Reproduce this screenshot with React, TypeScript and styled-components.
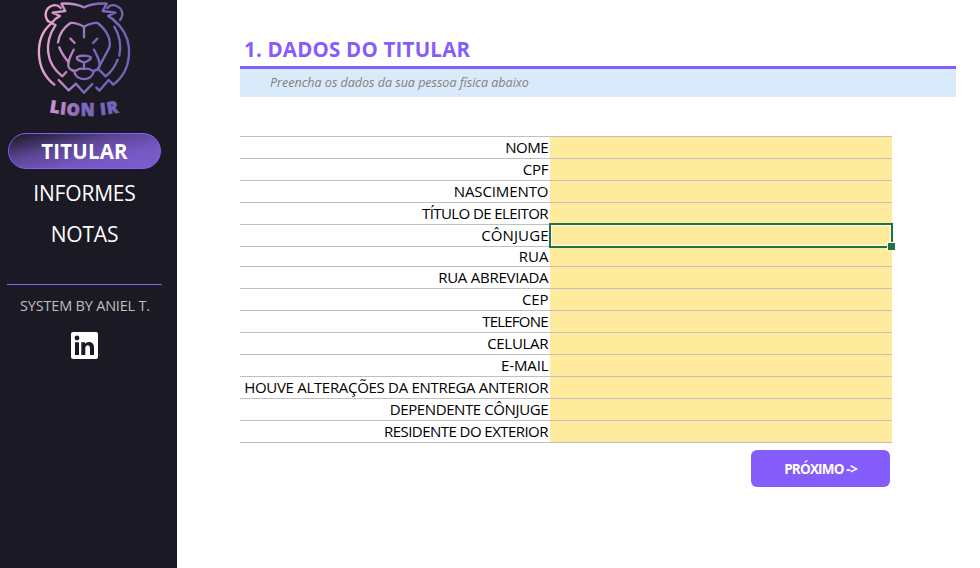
import React from "react";
import styled, { createGlobalStyle } from "styled-components";

const GlobalStyle = createGlobalStyle`
  * { box-sizing: border-box; }
  body { margin: 0; background: #fff; overflow: hidden; }
`;

const Page = styled.div`
  display: flex;
  width: 980px;
  height: 568px;
  font-family: "Open Sans", "Noto Sans", sans-serif;
  background: #fff;
`;

const Sidebar = styled.aside`
  width: 177px;
  height: 100%;
  flex: none;
  display: flex;
  flex-direction: column;
  background: #1a1924;
`;

const LogoSvg = styled.svg`
  display: block;
  width: 130px;
  height: 125px;
  margin-left: 20px;
`;

const Nav = styled.nav`
  display: flex;
  flex-direction: column;
  gap: 5px;
  width: 153px;
  margin: 8px 0 0 8px;
`;

const NavItem = styled.a<{ $active?: boolean }>`
  height: 36px;
  display: flex;
  align-items: center;
  justify-content: center;
  border-radius: 18px;
  border: 1px solid ${(p) => (p.$active ? "#855dfb" : "transparent")};
  padding-top: ${(p) => (p.$active ? "0" : "2px")};
  background: ${(p) =>
    p.$active ? "linear-gradient(167deg, #211d30 5%, #5b4693 38%, #7657c2 68%, #7c5dcf 100%)" : "none"};
  color: #fff;
  font-size: ${(p) => (p.$active ? "20.5px" : "21px")};
  font-weight: ${(p) => (p.$active ? 700 : 400)};
  letter-spacing: ${(p) => (p.$active ? "0.2px" : "-0.2px")};
`;

const Divider = styled.div`
  width: 155px;
  height: 1px;
  margin: 33px 0 0 7px;
  background: #855dfb;
`;

const Credit = styled.div`
  width: 170px;
  margin-top: 11px;
  line-height: 20px;
  text-align: center;
  font-size: 14.5px;
  letter-spacing: -0.2px;
  color: #bfbfbf;
`;

const LinkedIn = styled.svg`
  display: block;
  width: 30px;
  height: 28px;
  margin: 16px 0 0 71px;
`;

const Main = styled.main`
  width: 716px;
  margin-left: 63px;
`;

const Title = styled.h1`
  margin: 0;
  height: 69px;
  padding: 36px 0 0 4px;
  border-bottom: 3px solid #855dfb;
  color: #855dfb;
  font-size: 20.5px;
  letter-spacing: 0.2px;
  line-height: 27px;
  font-weight: 700;
  white-space: nowrap;
`;

const Subtitle = styled.p`
  margin: 0;
  height: 28px;
  padding-left: 30px;
  background: #d9ebfa;
  color: #7f7f7f;
  font-size: 12.5px;
  line-height: 28px;
  font-style: italic;
`;

const Form = styled.div`
  width: 652px;
  margin-top: 39px;
  border-top: 1px solid #bfbfbf;
`;

const Row = styled.div<{ $height: number }>`
  display: flex;
  height: ${(p) => p.$height}px;
  line-height: ${(p) => p.$height - 1}px;
  border-bottom: 1px solid #bfbfbf;
`;

const Label = styled.label<{ $spacing: number }>`
  width: 310px;
  padding-right: ${(p) => 1.5 - p.$spacing}px;
  text-align: right;
  white-space: nowrap;
  color: #000;
  font-size: 15px;
  letter-spacing: ${(p) => p.$spacing}px;
`;

const Field = styled.div`
  position: relative;
  flex: 1;
  background: #ffeb9c;
`;

const Selection = styled.div`
  position: absolute;
  z-index: 1;
  inset: -2px -1px -2px -1px;
  border: 2px solid #217346;
  box-shadow: inset 0 0 0 1px #fff;

  &::after {
    content: "";
    position: absolute;
    right: -4px;
    bottom: -4px;
    width: 7px;
    height: 7px;
    border: 1px solid #fff;
    border-width: 1px 0 0 1px;
    background: #217346;
  }
`;

const NextButton = styled.button`
  display: block;
  width: 139px;
  height: 37px;
  margin: 7px 0 0 511px;
  padding: 1px 0 0;
  border: 0;
  border-radius: 6px;
  background: #855dfb;
  color: #fff;
  font-family: "Open Sans", sans-serif;
  font-size: 13.5px;
  font-weight: 700;
  letter-spacing: -0.8px;
`;

const fields = [
  { label: "NOME", spacing: -0.5 },
  { label: "CPF", spacing: -0.2 },
  { label: "NASCIMENTO", spacing: -0.1 },
  { label: "TÍTULO DE ELEITOR", spacing: -0.6 },
  { label: "CÔNJUGE", spacing: 0.1, selected: true },
  { label: "RUA", spacing: 0, height: 20 },
  { label: "RUA ABREVIADA", spacing: -0.25 },
  { label: "CEP", spacing: -0.2 },
  { label: "TELEFONE", spacing: -0.8 },
  { label: "CELULAR", spacing: -0.3 },
  { label: "E-MAIL", spacing: -0.15 },
  { label: "HOUVE ALTERAÇÕES DA ENTREGA ANTERIOR", spacing: -0.3 },
  { label: "DEPENDENTE CÔNJUGE", spacing: -0.4 },
  { label: "RESIDENTE DO EXTERIOR", spacing: -0.55 },
];

const letters = [
  { ch: "L", x: 88, y: 336, r: 9 },
  { ch: "I", x: 119, y: 342, r: 6 },
  { ch: "O", x: 139, y: 345, r: 4 },
  { ch: "N", x: 182, y: 348, r: 0 },
  { ch: "I", x: 242, y: 346, r: -6 },
  { ch: "R", x: 263, y: 343, r: -9 },
];

function LionLogo() {
  return (
    <LogoSvg viewBox="0 0 390 375" aria-label="Lion IR">
      <defs>
        <linearGradient id="lion" gradientUnits="userSpaceOnUse" x1="55" y1="150" x2="325" y2="190">
          <stop offset="0" stopColor="#eaa9d0" />
          <stop offset="0.3" stopColor="#c58ac5" />
          <stop offset="0.55" stopColor="#7f68bd" />
          <stop offset="1" stopColor="#7064b6" />
        </linearGradient>
      </defs>
      <g fill="none" stroke="url(#lion)" strokeWidth="7" strokeLinecap="round" strokeLinejoin="round">
        <path d="M84 63C72 48 76 25 94 18C106 13 116 17 122 24" />
        <path d="M300 60C312 46 308 25 290 18C278 13 268 17 262 24" />
        <path d="M94 70L106 57L120 48L98 38L136 33L124 11C151 9 173 13 192 22C211 13 233 9 260 11L248 33L286 38L264 48L278 57L298 77" />
        <path d="M84 63L106 75M94 70C43 112 43 207 103 254" />
        <path d="M106 76C72 128 76 190 127 229L139 216" />
        <path d="M278 57L300 79C341 128 337 211 280 254L266 240L238 272L229 263" />
        <path d="M283 80C299 106 304 137 298 167M293 179C285 200 274 216 257 229L239 211" />
        <path d="M116 240L146 271L168 251L192 278L217 252" />
        <path d="M114 127C117 104 131 83 151 69C165 67 179 73 192 80C205 73 219 67 233 69C261 91 274 119 268 143L232 210" />
        <path d="M118 142C125 162 135 173 146 187M192 80V112M151 116L164 129M232 116L219 129" />
        <path d="M161 149C153 166 143 180 145 198C148 211 160 214 170 211C178 204 185 205 192 207C199 205 207 204 215 211C229 214 238 207 239 196C240 180 230 166 222 149" />
        <path d="M171 171C184 166 200 166 212 171C214 177 207 181 202 183C197 188 187 188 182 183C176 181 169 177 171 171ZM192 188V206M163 215C167 244 216 245 221 215" />
      </g>
      <g
        fill="url(#lion)"
        stroke="url(#lion)"
        strokeWidth="2"
        fontFamily="Open Sans, sans-serif"
        fontSize="50"
        fontWeight="800"
      >
        {letters.map((l, i) => (
          <text key={i} x={l.x} y={l.y} transform={`rotate(${l.r} ${l.x} ${l.y})`}>
            {l.ch}
          </text>
        ))}
      </g>
    </LogoSvg>
  );
}

export default function App() {
  return (
    <Page>
      <GlobalStyle />
      <Sidebar>
        <LionLogo />
        <Nav>
          <NavItem $active>TITULAR</NavItem>
          <NavItem>INFORMES</NavItem>
          <NavItem>NOTAS</NavItem>
        </Nav>
        <Divider />
        <Credit>SYSTEM BY ANIEL T.</Credit>
        <LinkedIn viewBox="0 0 30 28" aria-label="LinkedIn">
          <rect width="27" height="27" rx="2" fill="#fff" />
          <g fill="#1a1924">
            <circle cx="6" cy="6" r="2.4" />
            <path d="M4 10.3H8V23H4ZM10.3 10.3H14V12C15.6 9.2 23 8.6 23 15.5V23H19V16.5C19 12 14.3 12.6 14.3 16.4V23H10.3Z" />
          </g>
          <circle cx="28.4" cy="22.6" r="0.6" fill="#6c6b73" />
        </LinkedIn>
      </Sidebar>
      <Main>
        <Title>1. DADOS DO TITULAR</Title>
        <Subtitle>Preencha os dados da sua pessoa física abaixo</Subtitle>
        <Form>
          {fields.map((f) => (
            <Row key={f.label} $height={f.height ?? 22}>
              <Label $spacing={f.spacing}>{f.label}</Label>
              <Field>{f.selected && <Selection />}</Field>
            </Row>
          ))}
        </Form>
        <NextButton>PRÓXIMO -&gt;</NextButton>
      </Main>
    </Page>
  );
}
